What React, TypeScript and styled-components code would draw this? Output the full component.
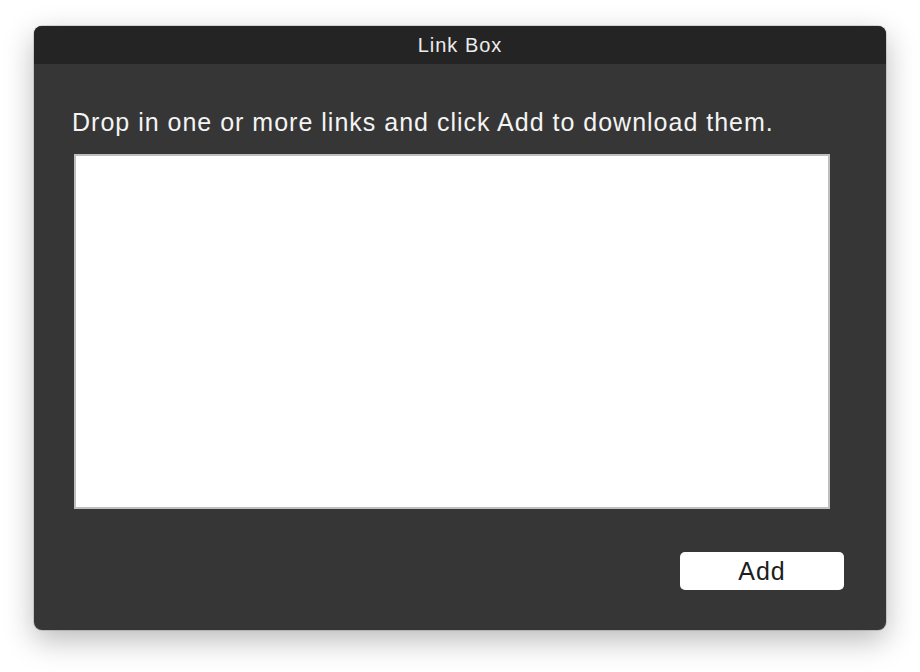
import React from "react";
import styled, { createGlobalStyle } from "styled-components";

const Global = createGlobalStyle`
  html, body { margin: 0; padding: 0; background: #ffffff; }
  body { font-family: "Liberation Sans", Arial, sans-serif; }
`;

const Page = styled.div`
  width: 920px;
  height: 672px;
  padding: 26px 0 0 34px;
  box-sizing: border-box;
`;

const Window = styled.div`
  width: 852px;
  height: 604px;
  border-radius: 8px;
  overflow: hidden;
  background: #363636;
  box-shadow: 0 0 0 1px rgba(0, 0, 0, 0.12), 0 10px 30px rgba(0, 0, 0, 0.28);
  display: flex;
  flex-direction: column;
`;

const TitleBar = styled.div`
  height: 38px;
  flex: none;
  background: #242424;
  color: #ececec;
  font-size: 20px;
  letter-spacing: 1px;
  display: flex;
  align-items: center;
  justify-content: center;
`;

const Body = styled.div`
  flex: 1;
  padding: 44px 56px 0 38px;
  display: flex;
  flex-direction: column;
`;

const Prompt = styled.div`
  color: #f4f4f4;
  font-size: 25px;
  line-height: 29px;
  letter-spacing: 1px;
  margin-bottom: 17px;
  white-space: nowrap;
`;

const LinkArea = styled.textarea`
  width: 756px;
  height: 355px;
  box-sizing: border-box;
  margin: 0 0 0 2px;
  border: 2px solid #bfbfbf;
  background: #ffffff;
  resize: none;
  outline: none;
  font-family: "Liberation Sans", Arial, sans-serif;
  font-size: 16px;
  padding: 4px;
`;

const Footer = styled.div`
  display: flex;
  justify-content: flex-end;
  margin-top: 43px;
  margin-right: -14px;
`;

const AddButton = styled.button`
  width: 164px;
  height: 38px;
  border: none;
  border-radius: 5px;
  background: #ffffff;
  color: #1e1e1e;
  font-family: "Liberation Sans", Arial, sans-serif;
  font-size: 25px;
  letter-spacing: 1px;
  line-height: 29px;
  padding: 0;
  display: flex;
  align-items: center;
  justify-content: center;
`;

export default function App() {
  return (
    <>
      <Global />
      <Page>
        <Window>
          <TitleBar>Link Box</TitleBar>
          <Body>
            <Prompt>Drop in one or more links and click Add to download them.</Prompt>
            <LinkArea />
            <Footer>
              <AddButton>Add</AddButton>
            </Footer>
          </Body>
        </Window>
      </Page>
    </>
  );
}
